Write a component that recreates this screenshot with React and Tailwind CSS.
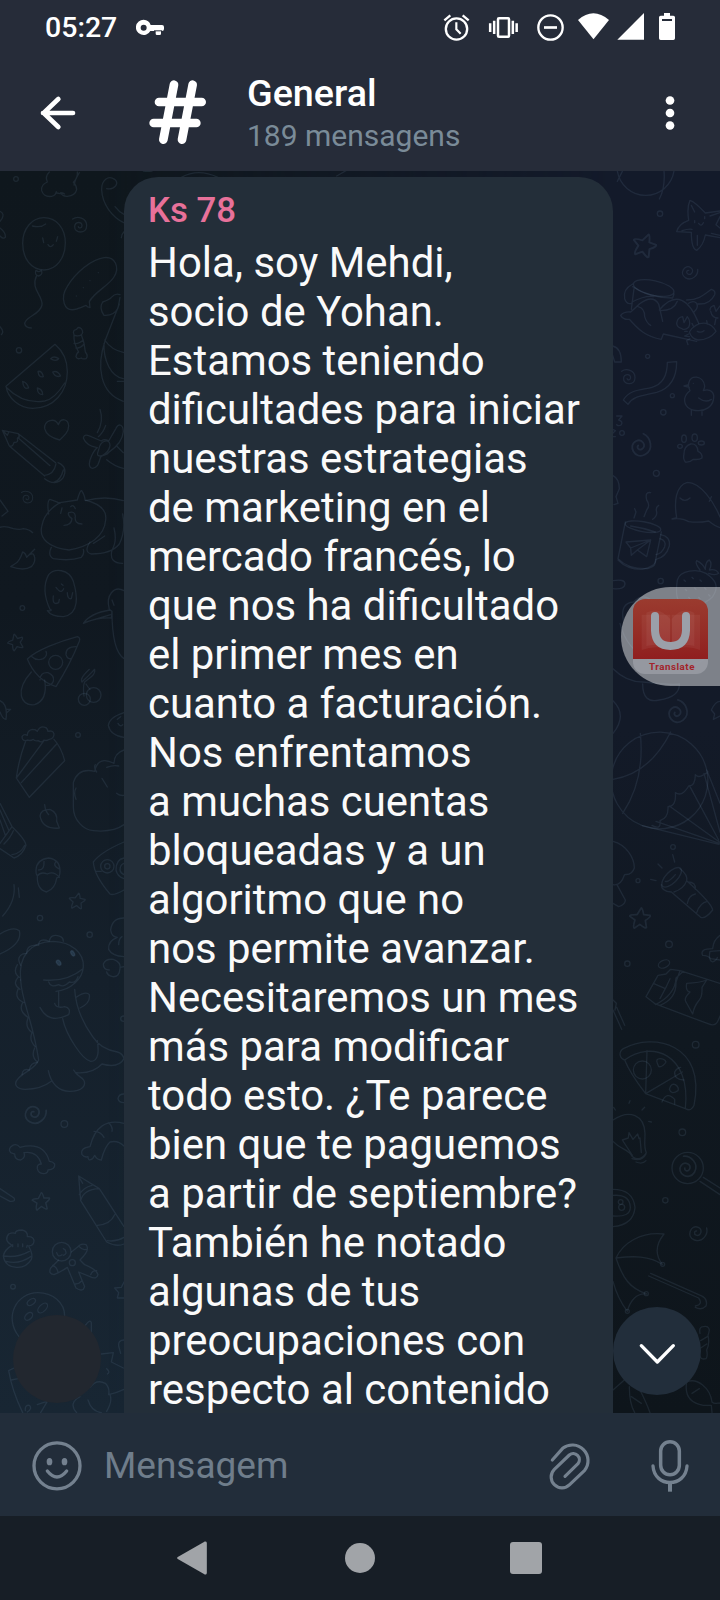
import React from "react";

const LINES = [
  "Hola, soy Mehdi,",
  "socio de Yohan.",
  "Estamos teniendo",
  "dificultades para iniciar",
  "nuestras estrategias",
  "de marketing en el",
  "mercado francés, lo",
  "que nos ha dificultado",
  "el primer mes en",
  "cuanto a facturación.",
  "Nos enfrentamos",
  "a muchas cuentas",
  "bloqueadas y a un",
  "algoritmo que no",
  "nos permite avanzar.",
  "Necesitaremos un mes",
  "más para modificar",
  "todo esto. ¿Te parece",
  "bien que te paguemos",
  "a partir de septiembre?",
  "También he notado",
  "algunas de tus",
  "preocupaciones con",
  "respecto al contenido",
];

// Icons are drawn on a grid three times finer than the page pixels.
function Icon({ x, y, w, h, children }) {
  return (
    <svg width={w / 3} height={h / 3} viewBox={`${x} ${y} ${w} ${h}`} fill="none" className="block shrink-0">
      {children}
    </svg>
  );
}

function StatusBar() {
  return (
    <div className="flex h-[54px] shrink-0 items-center pr-[45px] pl-[45px] text-white">
      <span className="w-[72px] pt-px text-[28.500px] leading-[34px] font-medium">05:27</span>
      <div className="ml-[19px]">
        <Icon x={408} y={0} w={84} h={162}>
          <path fill="#fff" fillRule="evenodd" d="M431 59a23 23 0 1 0 20 34h16v8q0 4 4 4h8q4 0 4-4v-8h3q6 0 6-6v-6q0-6-6-6h-34a23 23 0 0 0-21-16zM431 74a9 9 0 1 1 0 18 9 9 0 0 1 0-18z" />
          <path stroke="#262c39" strokeWidth="3" d="M462 92.500h24" />
        </Icon>
      </div>
      <div className="ml-auto flex items-center">
        <Icon x={249} y={0} w={81} h={162}>
          <circle cx="289.500" cy="87" r="32" stroke="#fff" strokeWidth="7" />
          <path d="M289 67v21l13 13" stroke="#fff" strokeWidth="6.500" />
          <path d="M253 61l18-15M326 61l-18-15" stroke="#fff" strokeWidth="7" />
        </Icon>
        <div className="w-[18px]" />
        <Icon x={384} y={0} w={93} h={162}>
          <rect x="414" y="55" width="33" height="55" rx="3" stroke="#fff" strokeWidth="7.500" />
          <path d="M390.500 70v26M402.500 62v40M458.500 62v40M470 70v26" stroke="#fff" strokeWidth="7.500" />
        </Icon>
        <div className="w-[18px]" />
        <Icon x={531} y={0} w={81} h={162}>
          <circle cx="571.500" cy="82.500" r="36.500" stroke="#fff" strokeWidth="7" />
          <path d="M552 82.500h39" stroke="#fff" strokeWidth="8" />
        </Icon>
        <div className="w-[13px]" />
        <Icon x={651} y={0} w={99} h={162}>
          <path fill="#fff" d="M654 60Q700 20 747 60L700.500 118z" />
        </Icon>
        <div className="w-[7px]" />
        <Icon x={771} y={0} w={81} h={162}>
          <path fill="#fff" d="M852 39v80h-80z" />
        </Icon>
        <div className="w-[15px]" />
        <Icon x={897} y={0} w={48} h={162}>
          <path fill="#fff" d="M912 39h18v8h10q5 0 5 5v63q0 5-5 5h-38q-5 0-5-5V52q0-5 5-5h10z" />
          <path d="M906 60h30" stroke="#262c39" strokeWidth="6" />
        </Icon>
      </div>
    </div>
  );
}

function TopBar() {
  return (
    <div className="flex h-[117px] shrink-0 items-center pr-[45px] pl-[40px]">
      <Icon x={120} y={162} w={108} h={351}>
        <path d="M219 339h-90M175 297l-44 42 44 42" stroke="#fff" strokeWidth="14" strokeLinecap="round" strokeLinejoin="round" />
      </Icon>
      <div className="w-[73px]" />
      <Icon x={447} y={162} w={171} h={351}>
        <path d="M522 254L490 419M578 254L546 419M477 306h128M461 369h128" stroke="#fff" strokeWidth="26" strokeLinecap="round" />
      </Icon>
      <div className="ml-[41px] flex flex-col gap-[3px] pb-[2px]">
        <div className="text-[37.700px] leading-[44px] font-medium text-white">General</div>
        <div className="text-[30px] leading-[35px] text-[#7a8b98]">189 mensagens</div>
      </div>
      <div className="ml-auto">
        <Icon x={915} y={162} w={30} h={351}>
          <g fill="#fff">
            <circle cx="930" cy="301.500" r="13" />
            <circle cx="930" cy="339" r="13" />
            <circle cx="930" cy="376.500" r="13" />
          </g>
        </Icon>
      </div>
    </div>
  );
}

const STAR = "M0-24Q3-24 7-9L22-9Q25-6 12 4L16 20Q15 24 0 14L-12 24Q-16 22-12 5L-25-3Q-25-7-8-8z";
const SWIRL = "M-22-18C-8-28 20-22 20 2 20 28-18 26-16 4-15-10 6-12 6 2 6 10-4 11-5 5";

function Star({ x, y, s = 1, r = 0 }) {
  return <path transform={`translate(${x} ${y}) rotate(${r}) scale(${s})`} d={STAR} />;
}
function Swirl({ x, y, s = 1, r = 0 }) {
  return <path transform={`translate(${x} ${y}) rotate(${r}) scale(${s})`} d={SWIRL} />;
}
function Area({ x, y, children }) {
  return <g transform={`translate(${x} ${y}) scale(.33333)`}>{children}</g>;
}

function Wallpaper() {
  return (
    <svg className="absolute inset-0" width="720" height="1242" viewBox="0 171 720 1242" fill="none">
      <defs>
        <linearGradient id="wl" x1="0" y1="0" x2="0" y2="1">
          <stop offset="0" stopColor="#0f171d" />
          <stop offset=".35" stopColor="#101820" />
          <stop offset=".65" stopColor="#15202b" />
          <stop offset="1" stopColor="#182633" />
        </linearGradient>
        <linearGradient id="wr" x1="0" y1="0" x2="0" y2="1">
          <stop offset="0" stopColor="#131a2a" />
          <stop offset=".45" stopColor="#131a28" />
          <stop offset=".7" stopColor="#101820" />
          <stop offset="1" stopColor="#0e151b" />
        </linearGradient>
        <linearGradient id="fade" x1="0" y1="0" x2="1" y2="0">
          <stop offset=".15" stopColor="#000" />
          <stop offset=".85" stopColor="#fff" />
        </linearGradient>
        <mask id="rightSide">
          <rect y="171" width="720" height="1242" fill="url(#fade)" />
        </mask>
      </defs>
      <rect y="171" width="720" height="1242" fill="url(#wl)" />
      <rect y="171" width="720" height="1242" fill="url(#wr)" mask="url(#rightSide)" />

      <g stroke="#7fa3bd" strokeOpacity=".125" strokeWidth="4" strokeLinecap="round" strokeLinejoin="round">
        <Area x={0} y={170}>
          <circle cx="48" cy="27" r="7" />
          <path d="M148 6q-14 14-6 30-20 8-17 26 6 20 30 17 12-2 14-14M168 68q8 4 20 2M194 72q-6-4-12-4 6 12 20 11 24-2 28-20 0-12-10-22 14-14 12-31M222 45q4-20 16-37" />
          <path d="M320 56C345 60 358 40 344 28 325 15 304 30 305 60c2 42 30 80 66 98M345 110q12 16 27 23M544 22q50-28 110 0M430 3q14 2 26 0M1010 18l28-16M372 185q-8 8-8 18" />
          <path d="M0 124q14 6 6 22l-6 8M0 174q18 14 16 28-6 6-16-4" />
          <path d="M132 143c36 0 64 30 64 76 0 44-26 80-64 81-38 0-64-34-64-80 0-44 28-77 64-77zM97 168q26 6 40-6M128 204l3 14M173 200l-4 14M144 224q7 12 16 0" />
          <path d="M108 301q8 8 16 0 6 12-8 17-14-4-8-17zM110 317c-20 40 20 60 16 88-6 30-50 34-52 56q2 12 20 13" />
          <Swirl x={240} y={165} />
          <path d="M230 417c-40 12-50-34-28-68 24-40 70-80 110-86 34-4 48 30 30 58-16 26-60 46-74 74l2 18q-10-2-12-7-14 6-28 11zM229 378v0M250 353v0M270 332v0M295 308v0" />
          <path d="M222 494q-6-14 8-16 4-10 14-2 8 12 0 18 10 24 12 52 10 12 2 20-12 2-14-2-12 6-16-4 2-12 8-14-16-26-14-52zM224 496q12 4 20-2M222 520q12 4 28-10M228 534q12 2 24-12" />
          <path d="M360 374q-14-6-26 8-4 6-26 14-12 18 4 40 30 2 42-22 4-20 6-32M358 402l-42 108c-28 80-16 160 54 184M314 510q20 30 58 38M312 520c-2 50 20 100 58 106M352 634h20" />
          <path d="M165 523L18 649c6 36 40 66 80 66 64 0 104-50 104-110 0-34-16-64-37-82zM20 653q50 50 114 40 30-6 60-54" />
          <path d="M152 566q10-10 24 0-10 10-24 0zM114 604q12-2 16 16-14 4-16-16zM158 606q14-6 24 12-16 6-24-12zM68 634q14 4 18 20-16 6-18-20zM112 654q16 4 16 20-16 0-16-20z" />
          <circle cx="57" cy="541" r="8" />
          <path d="M0 470q14 14 4 24" />
          <path d="M179 810c-16-4-40-12-45-34-2-24 30-36 41-12 8-22 30-18 31 4 0 18-14 30-27 42z" />
          <path d="M300 718q12 36-8 70M317 766q-6 20-22 34" />
          <path d="M7 781l48 10 M56 805q4-6-1-14M7 781l21 47M10 784l12 12 4-9M28 828q10 4 14-11 14 2 10-12 10-8 2-14M55 791l112 87M56 805l94 82M28 828l106 90M174 878c24 10 24 28 16 44-14 20-36 20-56 4M168 882q-6 32-34 34M190 900q-8 30-26 36" />
          <path d="M250 804q2-12 16-7l38 16q10-8 22 0l22-38c8-18 22-10 22 10-2 26-20 46-44 62-4 8-16 8-24 14-8 24-8 30-24 34-14-2-12-20-2-40 6-12 10-18 16-22-22-4-36-12-42-29zM296 840c4-30 34-36 34-14-2 18-24 38-36 30-4-4 0-10 2-16zM320 869q24 20 50 26M350 828l20 20" />
          <Swirl x={82} y={982} s={0.8} />
          <path d="M0 990l24 34-18 14M0 1072q14-6 40 4 20 4 30 0 18 2 28 12" />
          <path d="M104 1138l-24 24q-4-14-12-16-10 30-24 36l-12 8q40 14 62 0 16-16 8-34-2-8-14-2" />
          <path d="M125 1070C130 1040 150 1015 180 998L232 990Q240 960 245 962q10 16 10 28c40 10 66 30 62 60-4 50-50 80-110 90-60-6-90-34-82-70zM146 1032q-6-40 4-44 18 6 30 12M186 1014l-4 16M212 1010q8-8 14 6M192 1066q22 0 24-20-14-10-10-18 18-6 20 10-4 24 20 24" />
          <path d="M154 1132q-12 24 6 34 50 8 84-4 10-10 6-24M270 1116q-20 30 4 36 60 0 84-30 20-40 10-90M256 992q60-16 114 0M342 1074q10 40-6 66-10 40 32 40M314 1098q-20 14-34 22" />
        </Area>

        <Area x={0} y={560}>
          <path d="M150 148q-28-60-4-104c18-20 60-18 74 20 12 40 20 98-30 106-24 0-40-6-48-18 14 2 14-4 8-4zM168 82l4 5M184 72l5 4M175 90q10 10 16-4M160 108q-4 30 16 20l2-10M202 98q0 20 12 18l4-18" />
          <circle cx="67" cy="144" r="7" />
          <Star x={48} y={246} r={-15} />
          <path d="M82 297C110 270 180 244 232 230q10 2 6 14-28 70-70 136-60-20-86-83zM96 290q14 14 34 6 14-10 8-22M228 260q-32 0-30 24 4 14 14 12M120 360q0-24 24-22 20 8 16 26-6 14-20 12" />
          <circle cx="167" cy="307" r="21" />
          <path d="M94 336q-36 40-30 72 8 30 40 26 40-14 30-74" />
          <circle cx="253" cy="418" r="18" />
          <circle cx="281" cy="405" r="22" />
          <path d="M252 408q-4-30 2-42M254 366c16-14 34-22 30-38-12 12-18 20-30 30l-8 8q-8-10 22-38M258 372q6 10 12 16" />
          <path d="M372 92c-30-16-56 14-44 56l8 6c0 70 8 124 36 142M336 120l6 16M250 190q20-30 80-40l6 4-2 20q-40-2-84 16zM252 188l80-24" />
          <path d="M0 422q24 10 18 56-10 0-18-22M18 448l14 0-12 10M372 458q-44 14-47 38 6 30 47 36M352 478l10-8M354 490q6 12 14 4" />
          <path d="M66 530q6-10 16-4 0-16 16-18 10 0 14 6 8-18 24-12 6 2 8 12 16-4 18 8 0 14-14 16-8 6-16 2-6 10-18 2-10 2-14-4-10 6-16 2-18 6-18-10zM76 546Q56 600 49 654l39 58 106-110q-10-40-32-64M49 654L132 542M64 668L170 552" />
          <circle cx="234" cy="525" r="7" />
          <path d="M372 570q-30 10-30 40-48-24-58 24-50-12-64 34V740c0 40 30 70 60 72 40 4 70-2 92-18M228 684q-8 14 0 34M290 636q-10-14-4-22M320 622q20-8 36-4M306 655l16 26M350 700q8 8 22 6" />
          <path d="M120 768q2-20 30-20 24 10 20 36l8 20q-50 6-58-36zM134 734q2 20 12 30" />
          <path d="M0 730l36 70-36 50M0 750l26 60M0 780l16 46M36 800q40 38 42 56-10 30-36 38L0 866M40 812q-8 20-28 40M74 856q-12 26-38 28" />
          <path d="M108 930q2-32 38-36 34 4 34 40 0 20-10 20-4 32-30 42-30-6-28-50-4 0-4-16zM112 948q10-14 30-6 20-10 36 10M116 930q18 0 16-26M168 904q-12 14 12 24" />
          <path d="M372 846q-70 30-92 60 2 40 50 96 10 6 42-12M288 934l16 0" />
          <circle cx="322" cy="919" r="20" /><circle cx="322" cy="919" r="8" />
          <path d="M372 894q-24 4-24 36 4 20 24 26M372 910q-12 4-12 20 2 10 12 14" />
          <Star x={232} y={1023} r={10} />
          <path d="M42 974q6 50-34 94M55 984l3 28" />
        </Area>

        <Area x={0} y={900}>
          <circle cx="120" cy="54" r="8" />
          <circle cx="269" cy="104" r="8" />
          <path d="M0 102q40-24 58-10 10 40-58 70" />
          <path d="M372 54q-36 0-40 36 2 20 20 22-28 10-26 36 10 20 46 22M356 134q0-18 10-24M328 210q-18 0-18-18 6-16 30-14 24 8 20 28-2 26-22 24-16-4-18-14M360 202l12-2" />
          <path d="M62 240C54 170 90 125 160 124c54 2 92 34 90 76-2 36-38 70-82 74M131 240q70 6 118-34M146 246q6 18 30 8 14 10 32-8 18 6 26-16" />
          <ellipse cx="176" cy="188" rx="6" ry="9" transform="rotate(-35 176 188)" fill="#25384a" />
          <ellipse cx="218" cy="160" rx="5" ry="9" transform="rotate(-30 218 160)" fill="#25384a" />
          <path d="M80 160q0-28 36-24 0-24 32-12 4-26 34-14 8 4 8 14M62 196q-14-24 6-34l12-2M58 232q-20-14-6-38M60 268q-24-16-6-36M72 308q-30-12-18-40M84 352q-30-20-16-44M94 396q-20-16-10-42M106 440q-20-20-10-42M112 486q-20-16-8-42M88 508q6-22 24-20M66 524q2-20 22-14" />
          <path d="M62 240c2 60 36 120 54 240-10 26-40 34-60 54-20 20-4 34 20 34 30 0 60-10 78-24M145 512c8 40 32 62 64 62 40 0 50-20 42-34-8-12-20-10-30-30M228 518q50 4 78-26 50 14 66-16-4-16-20-20-50-8-74-46-50-70-54-142M176 276v44M164 310q4 16 30 10 20 4 12 24-60 30-86-22M188 356c10 50 60 124 84 128 26 0 24-34 20-62M228 292q30-20 40-8 4 26-28 40" />
          <Swirl x={104} y={644} s={1.3} r={120} />
          <circle cx="193" cy="672" r="10" />
          <path d="M372 582q-16 0-18 14 2 12 18 12M372 348q-10 0-10 8t10 8" />
          <path d="M60 742q-10-12-22-6-16 10-6 22 10 4 12 4 0 18 18 18 16-8 10-22 40-6 52 34-14 0-12 14 4 18 24 14 8-2 8-10 22-2 20-18-6-8-16-8-16-60-88-42z" />
          <path d="M372 670q-80-20-102 70-30 4-24 24 8 10 18 6 0 16 14 6l6-10q6 14 20 14 10-40 26-54 24-6 42 12M282 694q20 0 30 18M326 668q14 14 10 26" />
        </Area>

        <Area x={0} y={1140}>
          <path d="M0 146l42 28q6 12-12 10L0 168" />
          <Star x={124} y={184} s={1.1} />
          <path d="M236 108l62 38 74 114M236 108l6 74 78 124q30 16 52 6M242 182q8-34 56-36M238 164q12-22 38-28M236 110l12 20M292 256q40-4 52-32M322 302q26 4 50-10" />
          <path d="M36 316q-26-14-10-34 12-6 20-2 0-10 20-10 18 4 16 20 18-2 20 12 0 14-16 16 14 26 8 40-16 26-44 24-36-2-40-34 4-20 26-32zM38 314v6M54 312v8M68 312v8M82 316l-2 6M12 348q40 6 76-14M18 364q40 10 74-14" />
          <circle cx="185" cy="335" r="28" />
          <path d="M170 338q4 16 16 6M190 326l6 4M190 346q12-4 6-14M176 360l-24 24q-8 18 10 20 20-8 40-22l26 62q20 14 26-4l-18-44 34 14q20 10 24-6-2-14-40-30l-14-14q32-30 18-46-16-6-26 8l-18 14M158 376q14 6 16 22M226 432q12 0 20-10M272 404q6-14 18-12M238 320q10 12 20 8" />
          <circle cx="217" cy="368" r="9" />
          <circle cx="39" cy="440" r="7" />
          <path d="M57 590C10 530 50 458 114 458c44 0 80 30 80 70" />
          <ellipse cx="94" cy="486" rx="14" ry="8" transform="rotate(-35 94 486)" />
          <ellipse cx="128" cy="504" rx="18" ry="10" transform="rotate(-45 128 504)" />
          <ellipse cx="86" cy="529" rx="14" ry="9" transform="rotate(-45 86 529)" />
          <path d="M372 426l-8 16-20 2 12 14-4 16 20 0M256 556q14-20 18-8v30M372 600q-18 0-16 18l6 22M304 642l36-4-6 28 36 18M320 686q12 10 2 16M26 692q10 60 42 126M26 692l16-8M34 720l20-4M76 812q-2-18 12-16 10 10-6 20M112 794q10-4 30-10l-20 34M240 770q-36 20-10 48M270 742q20-26 46-12 14 14 10 34 20-4 46-16M264 780q10 34 40 38M330 764q8 20-10 50" />
        </Area>

        <Area x={610} y={170}>
          <path d="M22 3a86 86 0 0 0 170 0M22 34l16-32M162 3q4 50-14 84" />
          <circle cx="150" cy="131" r="8" />
          <path d="M240 91q14 4 46 38l44-6M240 91q-10 20-4 60-30 10-36 34l44 2q0 50 16 54 20-14 26-46l44 8M244 106l10 20M216 182q20-6 30-4M262 226v-30M300 138l30-10M304 190l26 6M330 140l-12 24 12 10M254 152v6M284 140v6M266 160q8 12 14-2" />
          <Star x={104} y={226} s={1.45} r={20} />
          <Swirl x={238} y={308} s={0.95} r={120} />
          <ellipse cx="131" cy="354" rx="62" ry="22" transform="rotate(12 131 354)" />
          <path d="M68 342q-30 16-24 44 6 18 20 14M72 356l-8 62M68 350q50 34 120 34l4-12M66 396q40-20 64-16M32 436q10-12 30-10 14-12 26-24 40-30 58 0l12 52M32 436q8 14 26 12c20 20 40 50 96 60l6-16 100 22M148 420c50-60 90-30 118 40M84 410q20 4 20 30 6 20 18 26M152 422q40 0 50-28M230 390c34 0 50-14 74-32q14 4 10 16-14 30-50 28M236 400q14-10 24 0 6 14-8 26" />
          <path d="M238 486q20-30 50-26 20 4 30 24-20 26-54 26-20-4-26-24zM262 484q10 6 20-2M200 460q2-18 18-20l4 18 10-18q12 14 4 32-12 10-20 4-16-4-16-16zM300 420q0-10 12-14l6 18 12-16M302 424q4 20 22 20M318 444l-4 20M232 484l-8 0M236 492l-12 6 14 2M240 506l-10 6 4 12M246 460l4 8M290 452l2 10" />
          <path d="M8 528q26 6 26 48l-20 0-6-20M172 577l28-2c0 50-20 80-60 92-40 10-70 10-86 36L40 690c20-34 60-30 86-38 36-10 46-40 46-75z" />
          <circle cx="113" cy="559" r="6" />
          <Swirl x={56} y={621} s={0.95} />
          <circle cx="187" cy="677" r="6" /><circle cx="160" cy="727" r="8" />
          <circle cx="36" cy="789" r="7" /><circle cx="139" cy="910" r="9" />
          <path d="M236 640c4-28 44-24 48 8 0 6-2 10-4 14 20-8 36 6 30 28-4 20-24 32-44 32-30 0-44-16-42-36 2-12 8-18 16-24-4-6-6-14-4-22zM236 644l-14 4 16 4M250 640v0M266 684q20 16 38 4M244 720v16M276 720v16" />
          <path d="M20 738h16l-10 12q14 4 8 14-8 6-14 0M8 778l8 4-8 8M8 800h8" />
          <Swirl x={94} y={829} s={1.35} r={60} />
          <path d="M242 822q20-2 22 22 14 6 12 20-8 6-26 4-10 10-24 8-8-10-4-24 0-24 20-30z" />
          <ellipse cx="222" cy="806" rx="7" ry="11" /><ellipse cx="254" cy="803" rx="8" ry="11" /><ellipse cx="274" cy="819" rx="9" ry="6" /><ellipse cx="210" cy="829" rx="7" ry="6" />
          <path d="M232 937c-36 10-40 60-32 106l-14 4q30-4 50 8 30 4 60-2 20 16 34 20M232 937c40 0 80 60 98 104M210 984q14 14 30 0M304 980l-6 14M8 916q20 10 20 40l-10 24 6 20-12 4" />
          <path d="M122 968q-18-4-12 22 12 16 0 30l-8 20M74 1016l4 10-6 18M146 1006q-10 6-6 20 2 12-12 22" />
          <path d="M46 1056L24 1166q30 32 90 30 18-6 20-12l20-98" />
          <ellipse cx="99" cy="1070" rx="54" ry="15" transform="rotate(10 99 1070)" />
          <path d="M62 1068q40 6 74 18M152 1094q30 6 26 34-10 34-40 40M150 1106q20 6 14 24-8 20-26 24" />
          <path d="M48 1116l74-6-12 50-28-20-18 16-2-22zM62 1134l60-24-40 30" />
        </Area>

        <Area x={600} y={560}>
          <path d="M54 0q30 30 74 28 40-10 40-28M39 62q36-6 36 10-2 18-36 14" />
          <circle cx="182" cy="63" r="8" />
          <path d="M232 60c8-30 60-34 86-20 30 20 40 40 20 70-30 30-70 30-96 20q-18-14-10-70zM300 30q-16-20-10-28 20 10 26 26 0-24 12-28 10 10 0 30 20-4 28 10-10 8-30 0M252 60l4 4M276 52l4 4M300 60l4 4M256 88l4 4M284 84l4 4M314 84l4 4M266 112l4 4M296 112l4 4M326 104l4 4" />
          <path d="M70 180q-10-50 30-54 30-30 60 0 50 20 40 50M60 190q20 80 90 110 80 40 120 0M110 200q40-40 80 0 20 40-20 60-60 0-60-60M200 240q60-30 90 10l30-10v50q-50 50-100 10M39 326q40 40 90 40 90 10 110 6M128 372q0 60 50 48 60-10 60-46" />
          <Swirl x={234} y={458} s={1.35} r={50} />
          <path d="M360 424q-14 0-26 26l10 12-4 16 20-10M39 422q44 44 0 98" />
          <path d="M127 797A145 145 0 1 1 322 640M322 640a145 145 0 0 1-195 157M121 520q14 140-53 240M212 516Q150 640 39 658" />
          <path d="M324 636q-30 22-38 8 0 34-20 34-20 34-40 20 4 40-22 42 2 34-24 42 4 30-24 14M127 797l230 56M168 784l190 66M208 738l150 108M270 680l86 160M312 640l48 176M320 630l40 100" />
          <path d="M39 844c40 10 64 50 64 80-10 30-30 14-30 22-10 30-24 30-34 28M52 976l24 44q0 14-20 20l-17-10" />
          <circle cx="219" cy="861" r="7" /><circle cx="114" cy="962" r="6" />
          <path d="M218 884l6 22M174 912l12 12M152 958l16 4" />
          <ellipse cx="215" cy="952" rx="38" ry="17" transform="rotate(-45 215 952)" />
          <path d="M184 974q0 20 30 22l88 76q14 6 36-22-2-20-78-88 4-18-20-36M222 996q30-10 38-34M196 964q10 4 30-20M264 966q24 0 22 22M262 1030q4-24 24-28M290 1058q10-30 32-34" />
          <Star x={121} y={1075} s={1.3} r={5} />
          <circle cx="207" cy="1153" r="10" />
          <path d="M360 1126q-20 14-22 40-40 0-30 20 16 0 24 10l28 4" />
        </Area>

        <Area x={600} y={920}>
          <circle cx="82" cy="131" r="8" />
          <path d="M360 92l-30 2q-6 26 8 32 14-6 14-14" />
          <ellipse cx="192" cy="132" rx="18" ry="11" transform="rotate(-25 192 132)" />
          <path d="M240 152l120 38M240 152l-28-4-14 14-24 4-36 64 28 22 160 60q20 8 28-10l32-70M166 254q60-30 62-80l22-20M180 256q50-20 48-70l12-34M160 190l36 16 14-30M196 206l-16 30M320 180q-20 8-60 10-4 24 10 26-20 20-12 30l20 36c10-50 30-30 28-80l14-22M39 240l10 10-4 20M39 270l26 58M50 262l24 54" />
          <circle cx="287" cy="374" r="10" /><circle cx="247" cy="637" r="10" /><circle cx="196" cy="841" r="8" />
          <path d="M60 404q0-12 10-18c90-50 250-14 212 170q-8 20-26 10l-119-45Q90 460 74 420q-12-4-14-16zM74 420c80-60 200-20 182 146M141 392l-4 129 110-65" />
          <circle cx="127" cy="450" r="27" />
          <path d="M186 546q14-34 38-8v14M252 480q-30-2-28-24 6-12 18-14M172 430q-6-14 8-14 14 0 18 10-10 16-22 14zM208 508q6-20 18-14 12 8 8 18-20 14-26-4z" />
          <path d="M39 600c50-34 94-14 96 40 0 30-4 40 4 58-10 20-34 26-46 6-10-16-34-18-54-40M67 660l30 46M120 654l4 44M67 660l18-6 2-16 12 20 14-16 4 14M96 716q30 10 42-14M108 726q20 8 30-4M41 562l5 8M90 542l-3 8M134 562l-8 8M146 604l8 2" />
          <circle cx="263" cy="744" r="47" />
          <Swirl x={263} y={742} s={1.25} r={30} />
          <path d="M310 772l50 32M300 784l60 40" />
          <path d="M39 808q60 0 66 54-4 52-66 58M39 826q50-4 52 36 0 30-52 26" />
          <circle cx="62" cy="846" r="7" /><circle cx="65" cy="862" r="9" />
          <Swirl x={293} y={940} s={1.1} r={110} />
          <path d="M48 1014c20-44 74-80 144-72-24 30-30 60-4 92-40-28-90-26-140-20 20 60 40 90 92 108-30-4-50 20-58 52q-30-40-43-90M146 1068l150 66q14 20-10 24M152 1060l144 64q30 10 22 34-14 14-32 4" />
          <circle cx="188" cy="1033" r="6" /><circle cx="139" cy="1121" r="6" /><circle cx="82" cy="1174" r="6" />
          <path d="M300 1240q-4-20 10-20 16-4 18 10-2 12-4 16 6 24-4 44 4 20-2 26-16 4-18-8M302 1262l20-12M302 1284l18-12M260 1386c30-14 70 16 76 60 10 10 20 0 24 4M260 1386q-10 60 50 70l24 0 2 22M276 1420l22-14M88 1400q0 50 16 78M120 1410q20 40 30 68M94 1430l30 20M39 1410l34-30" />
        </Area>
      </g>
    </svg>
  );
}

function TranslateButton() {
  return (
    <div className="absolute top-[416px] right-0 flex h-[99px] w-[99px] items-center rounded-l-full bg-white/45 pl-3">
      <div className="flex h-[75px] w-[75px] flex-col overflow-hidden rounded-[12px]">
        <div className="h-[60px] bg-linear-to-b from-[#9c372a]/95 to-[#911919]/95">
          <Icon x={99} y={117} w={225} h={180}>
            <path d="M139 158q40-20 72 20v90q-30-20-72-10zM283 158q-40-20-68 20v90q30-20 68-10z" fill="#fff" fillOpacity=".05" />
            <path d="M125 164h86v106q-40-16-86 0zM215 164h85v106q-40-16-85 0z" fill="#fff" fillOpacity=".05" />
            <path d="M165 168v44q2 46 46 46 45 0 47-46v-44" stroke="#9ba0a9" strokeWidth="24" strokeLinecap="round" />
          </Icon>
        </div>
        <div className="flex h-[15px] items-center justify-center bg-[#999ca5]/85 pl-[3px] text-[9.800px] leading-[15px] font-bold tracking-[0.5px] text-[#a3242b]">
          Translate
        </div>
      </div>
    </div>
  );
}

function Chat() {
  return (
    <div className="relative h-[1242px] shrink-0 overflow-hidden">
      <Wallpaper />
      <div className="relative mt-[6px] ml-[124px] flex h-[1300px] w-[489px] flex-col gap-2 rounded-[34px] bg-[#232e39] pt-[13px] pl-[24px]">
        <div className="text-[34.800px] leading-[40px] font-medium text-[#e8719a]">Ks 78</div>
        <div className="text-[41.900px] leading-[49px] whitespace-nowrap text-[#fafafa]">
          {LINES.map((line) => (
            <div key={line}>{line}</div>
          ))}
        </div>
      </div>
      <div className="absolute top-[1144px] left-[13px] h-[88px] w-[88px] rounded-full bg-[#22272f]" />
      <TranslateButton />
      <div className="absolute top-[1136px] left-[613px] flex h-[88px] w-[88px] items-center justify-center rounded-full bg-[#222e3b]">
        <Icon x={39} y={1160} w={264} h={264}>
          <path d="M124 1276l48 49 48-49" stroke="#fff" strokeWidth="10" strokeLinecap="round" strokeLinejoin="round" />
        </Icon>
      </div>
    </div>
  );
}

function Composer() {
  return (
    <div className="flex h-[103px] shrink-0 items-center bg-[#222d3a] pr-[30px] pl-[32px]">
      <Icon x={96} y={39} w={150} h={309}>
        <circle cx="171" cy="197.500" r="69" stroke="#74818f" strokeWidth="10" />
        <ellipse cx="148.500" cy="185" rx="8.500" ry="11" fill="#74818f" />
        <ellipse cx="193.500" cy="185" rx="8.500" ry="11" fill="#74818f" />
        <path d="M142 213q29 36 58 0" stroke="#74818f" strokeWidth="10" strokeLinecap="round" />
      </Icon>
      <div className="ml-[22px] pt-[2px] text-[37px] leading-[44px] text-[#6f7d8b]">Mensagem</div>
      <div className="ml-auto flex items-center gap-[59px]">
        <Icon x={567} y={39} w={129} h={309}>
          <path d="M577 180L608 145A47 47 0 0 1 674 211L629 254A32.500 32.500 0 0 1 583 208L628 165A18.500 18.500 0 0 1 654 191L615 229" stroke="#74818f" strokeWidth="9.500" strokeLinecap="round" strokeLinejoin="round" />
        </Icon>
        <Icon x={873} y={39} w={117} h={309}>
          <rect x="902" y="125" width="56" height="99" rx="28" stroke="#74818f" strokeWidth="10.500" />
          <path d="M879 198c4 66 98 66 102 0" stroke="#74818f" strokeWidth="10" strokeLinecap="round" />
          <path d="M930 248v27" stroke="#74818f" strokeWidth="12" />
        </Icon>
      </div>
    </div>
  );
}

function NavBar() {
  return (
    <div className="flex h-[84px] shrink-0 items-center bg-[#171e26] pl-[177px]">
      <Icon x={531} y={348} w={90} h={252}>
        <path d="M535 474l80-46q2-1 2 2v88q0 3-2 2z" fill="#a1a4a8" stroke="#a1a4a8" strokeWidth="7" strokeLinejoin="round" />
      </Icon>
      <div className="ml-[138px] h-[30px] w-[30px] rounded-full bg-[#a1a4a8]" />
      <div className="ml-[135px] h-8 w-8 rounded-[3px] bg-[#a1a4a8]" />
    </div>
  );
}

export default function App() {
  return (
    <div className="flex h-[1600px] w-[720px] flex-col overflow-hidden bg-[#262c39] font-[Roboto,sans-serif]">
      <StatusBar />
      <TopBar />
      <Chat />
      <Composer />
      <NavBar />
    </div>
  );
}
